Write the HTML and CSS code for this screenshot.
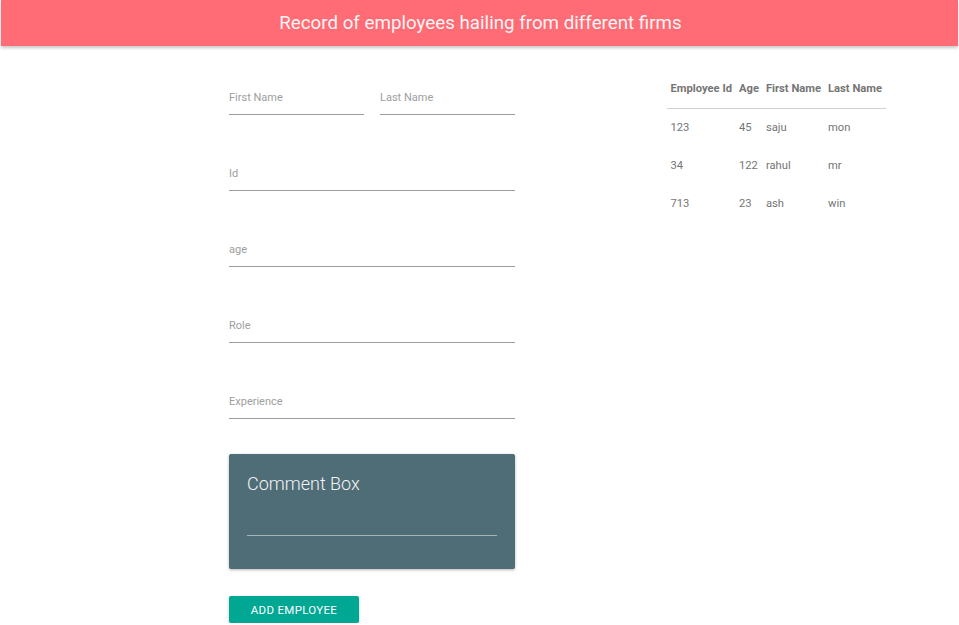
FILE: index.html
```html
<!DOCTYPE html>
<html>
<head>
<meta charset="utf-8">
<title>Employees</title>
<link rel="stylesheet" href="styles.css">
</head>
<body>
<header class="topbar">
  <h1 class="title">Record of employees hailing from different firms</h1>
</header>
<main class="main">
  <form class="form">
    <div class="row">
      <div class="field"><span class="label">First Name</span></div>
      <div class="field"><span class="label">Last Name</span></div>
    </div>
    <div class="field"><span class="label">Id</span></div>
    <div class="field"><span class="label">age</span></div>
    <div class="field"><span class="label">Role</span></div>
    <div class="field"><span class="label">Experience</span></div>
    <div class="comment">
      <div class="comment-title">Comment Box</div>
      <div class="comment-line"></div>
    </div>
    <button type="button" class="btn">Add Employee</button>
  </form>
  <table class="table">
    <thead>
      <tr><th>Employee Id</th><th>Age</th><th>First Name</th><th>Last Name</th></tr>
    </thead>
    <tbody>
      <tr><td>123</td><td>45</td><td>saju</td><td>mon</td></tr>
      <tr><td>34</td><td>122</td><td>rahul</td><td>mr</td></tr>
      <tr><td>713</td><td>23</td><td>ash</td><td>win</td></tr>
    </tbody>
  </table>
</main>
</body>
</html>
```
FILE: styles.css
```css
* { box-sizing: border-box; }
html, body { margin: 0; padding: 0; background: #fff; }
body { font-family: Roboto, "Noto Sans", sans-serif; color: #757575; }

.topbar {
  height: 46px;
  background: #ff6c75;
  display: flex;
  align-items: center;
  justify-content: center;
  box-shadow: 0 2px 3px rgba(0,0,0,0.22);
  margin: 0 1px;
}
.title {
  margin: 0;
  font-size: 18.75px;
  font-weight: 400;
  color: rgba(255,255,255,0.95);
  padding-left: 2px;
}

.main {
  display: flex;
  align-items: flex-start;
  padding-left: 229px;
}

.form {
  width: 286px;
  margin-top: 45px;
  display: flex;
  flex-direction: column;
  gap: 52px;
}
.row {
  display: flex;
  gap: 16px;
}
.row .field { flex: 1; }
.field {
  border-bottom: 1px solid #9e9e9e;
  padding-bottom: 9px;
}
.label {
  display: block;
  font-size: 11px;
  line-height: 14px;
  color: #9e9e9e;
}

.comment {
  margin-top: -17px;
  height: 115px;
  background: #4f6d77;
  border-radius: 2px;
  box-shadow: 0 1px 3px rgba(0,0,0,0.3);
  padding: 19px 18px 0;
}
.comment-title {
  font-size: 18px;
  font-weight: 300;
  line-height: 22px;
  color: #f2f5f6;
}
.comment-line {
  margin-top: 40px;
  height: 1px;
  background: #a6b5ba;
}

.btn {
  margin-top: -25px;
  width: 130px;
  height: 27px;
  border: 0;
  border-radius: 2px;
  background: #00a894;
  color: #fff;
  font-family: Roboto, sans-serif;
  font-size: 11.5px;
  font-weight: 400;
  text-transform: uppercase;
  letter-spacing: 0.3px;
  box-shadow: 0 1px 3px rgba(0,0,0,0.25);
  padding: 0;
}

.table {
  margin-left: 152px;
  margin-top: 22px;
  border-collapse: collapse;
  font-size: 11.2px;
  color: #757575;
}
.table th {
  height: 40px;
  padding: 2px 3.5px 0;
  text-align: left;
  font-weight: 700;
  border-bottom: 1px solid #d0d0d0;
}
.table td {
  height: 38px;
  padding: 0 3.5px;
  text-align: left;
}
```
